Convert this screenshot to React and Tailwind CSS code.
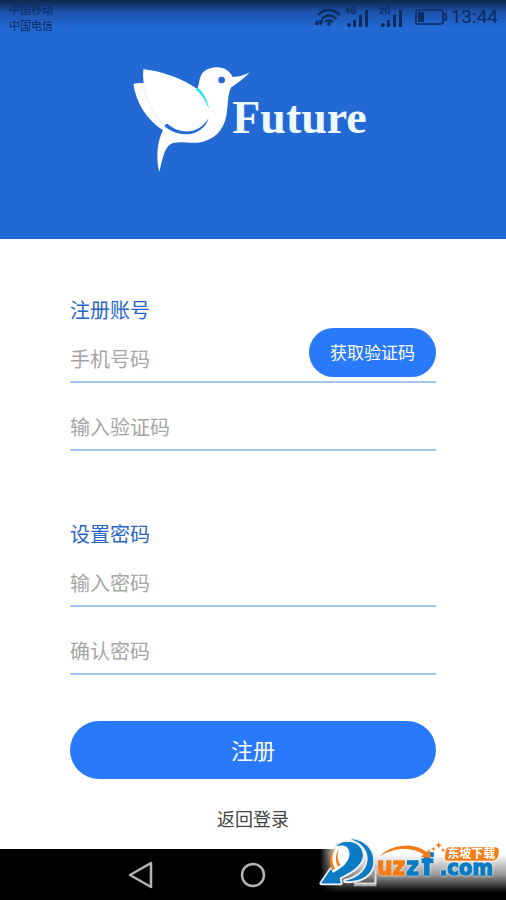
const SANS = "font-['Noto_Sans_CJK_SC',sans-serif]"

function SignalIcon({ label }) {
  return (
    <svg className="h-[22px] w-6" viewBox="0 0 24 22" fill="currentColor" aria-hidden="true">
      <text x="0" y="8" fontSize="9" fontWeight="700" fontFamily="Roboto, sans-serif">{label}</text>
      <circle cx="4" cy="19" r="2" />
      <rect x="8" y="14" width="3" height="7" />
      <rect x="14" y="9" width="3" height="12" />
      <rect x="20" y="4" width="3" height="17" />
    </svg>
  )
}

function WifiIcon() {
  return (
    <svg className="h-5 w-7" viewBox="0 0 28 20" fill="none" stroke="currentColor" aria-hidden="true">
      <path d="M3 8Q14-2 25 8" strokeWidth="2.4" />
      <path d="M6.500 12Q14 5 21.500 12" strokeWidth="2.400" />
      <path d="M10 15Q14 11.500 18 15" strokeWidth="2.200" />
      <circle cx="14" cy="17" r="2" fill="currentColor" stroke="none" />
      <path d="M0 16l2-3 2 3v2H0zM4 15l2 4 2-4v-2H4z" fill="currentColor" stroke="none" />
    </svg>
  )
}

function BatteryIcon() {
  return (
    <svg className="h-4 w-8" viewBox="0 0 32 16" fill="none" stroke="currentColor" aria-hidden="true">
      <rect x="1" y="1" width="27" height="14" rx="2" strokeWidth="1.600" />
      <path d="M29 5h2v6h-2" strokeWidth="1.600" />
      <rect x="3" y="3" width="6" height="10" fill="currentColor" stroke="none" />
    </svg>
  )
}

function StatusBar() {
  return (
    <div className="flex h-[34px] items-center justify-between bg-linear-to-b from-[#0f2c57] from-5% via-[#1c52ab] via-35% to-[#2269d3] to-80% pr-2 pl-[9px] text-[#0c2b60]">
      <div className="text-[11px] leading-4">
        <p>中国移动</p>
        <p>中国电信</p>
      </div>
      <div className="flex items-center">
        <WifiIcon />
        <span className="ml-0.5 flex gap-2.5">
          <SignalIcon label="4G" />
          <SignalIcon label="2G" />
        </span>
        <span className="mr-1 ml-3">
          <BatteryIcon />
        </span>
        <span className="font-['Roboto',sans-serif] text-[19px] leading-6">13:44</span>
      </div>
    </div>
  )
}

function BirdLogo() {
  return (
    <svg className="h-[107px] w-[120px] shrink-0" viewBox="34 32 360 321" aria-hidden="true">
      <path
        fill="#fff"
        d="M68 42C125 48 180 68 229 100C236 90 234 73 242 58C252 42 270 36 290 36C312 37 327 47 336 65C353 65 370 60 388 51C372 68 352 82 332 96C320 117 323 147 317 181C309 225 281 255 232 262C203 264 180 258 157 263C134 270 128 298 116 350C108 320 108 281 117 250Q122 235 127 225C78 193 47 144 38 86Q52 82 69 84Q66 62 68 42Z"
      />
      <path fill="#2ee3e8" d="M224 102L232 97C249 112 262 136 265 162C255 136 243 118 224 102Z" />
      <path fill="none" stroke="#e4dcf8" strokeWidth="2" d="M69 84C72 132 95 175 131 209" />
      <path fill="#2269d3" d="M132 213Q133 205 141 206C175 236 233 241 264 188C255 218 228 238 194 237C168 236 146 226 132 213Z" />
      <circle cx="303" cy="74" r="10" fill="#2269d3" />
    </svg>
  )
}

function Field({ id, label, type = 'text', className = '', children }) {
  return (
    <div className={`flex items-start border-b-2 border-[#a6c6ee] ${className}`}>
      <input
        id={id}
        type={type}
        aria-label={label}
        placeholder={label}
        className="h-[45px] min-w-0 flex-1 self-end bg-transparent text-xl outline-none placeholder:text-[#a6a6a6]"
      />
      {children}
    </div>
  )
}

function NavBar() {
  return (
    <nav className="flex h-[51px] items-center justify-center gap-[84px] bg-black text-[#b4b4b4]">
      <button type="button" aria-label="返回">
        <svg className="h-7 w-7" viewBox="0 0 28 28" fill="none" stroke="currentColor" strokeWidth="2.500" strokeLinejoin="round">
          <path d="M3 14L24 2V26Z" />
        </svg>
      </button>
      <button type="button" aria-label="主页">
        <svg className="h-7 w-7" viewBox="0 0 28 28" fill="none" stroke="currentColor" strokeWidth="2.500">
          <circle cx="14" cy="14" r="11" />
        </svg>
      </button>
      <button type="button" aria-label="最近任务">
        <svg className="h-7 w-7" viewBox="0 0 28 28" fill="none" stroke="currentColor" strokeWidth="2.500">
          <rect x="4" y="4" width="20" height="20" />
        </svg>
      </button>
    </nav>
  )
}

// Download-site stamp laid over the bottom right corner
function Watermark() {
  return (
    <div className="pointer-events-none absolute right-0 bottom-0 h-[70px] w-[196px]">
      <div className="absolute inset-x-0 bottom-0 h-[51px] bg-linear-to-b from-white from-10% via-[#999] via-50% to-transparent to-85% mask-l-from-85% mask-l-to-95%" />
      <svg className="relative h-full w-full" viewBox="0 0 588 210" aria-hidden="true">
        <path fill="none" stroke="#ddd" strokeWidth="5" d="M135 160H197V115" />
        <g stroke="#eee" strokeWidth="12" strokeLinejoin="round" paintOrder="stroke">
          <path fill="#0a7bc4" d="M79 48C105 26 157 34 158 76C157 108 121 126 88 144L92 160L34 160L63 118L69 129C96 114 118 97 119 72C118 50 103 41 79 48Z" />
          <path fill="#0a7bc4" d="M124 28C165 32 191 59 190 96C189 133 155 157 105 153C147 144 171 119 173 88C174 62 157 40 124 28Z" />
        </g>
        <path fill="#fff" d="M79 48C60 70 58 102 69 129C96 114 118 97 119 72C118 50 103 41 79 48Z" />
        <path fill="#0a7bc4" d="M79 48C105 26 157 34 158 76C157 108 121 126 88 144L92 160L34 160L63 118L69 129C96 114 118 97 119 72C118 50 103 41 79 48Z" />
        <path fill="#f47b16" d="M78 52C57 70 55 98 67 121L75 116C63 92 65 71 78 52ZM88 56C75 74 75 93 84 110L91 105C82 88 80 74 88 56Z" />
        <g
          className="drop-shadow-[0_0_3px_#fff]"
          fontFamily="'DejaVu Sans Condensed', 'DejaVu Sans', sans-serif"
          fontWeight="700"
          strokeWidth="4"
        >
          <text x="201" y="135" fontSize="73" fill="#f47b16" stroke="#f47b16">uz</text>
          <g fill="#0a7bc4" stroke="#0a7bc4">
            <text x="289" y="135" fontSize="73">z</text>
            <text x="335" y="135" fontSize="86">f</text>
            <text x="389" y="135" fontSize="66">.com</text>
          </g>
        </g>
        <path fill="#f47b16" d="M208 79C248 40 313 37 350 66L358 58L363 84L333 81L341 73C304 49 250 52 208 79Z" />
        <path fill="#f47b16" d="M386 36l3 7 7 3-7 3-3 7-3-7-7-3 7-3zM370 50l2 5 5 2-5 2-2 5-2-5-5-2 5-2zM399 53l2 5 5 2-5 2-2 5-2-5-5-2 5-2z" />
        <path fill="#f47b16" stroke="#fff" strokeWidth="5" paintOrder="stroke" d="M418 52H553Q569 52 566 68L564 79Q561 92 546 92H413Q402 92 405 80L407 64Q409 52 418 52Z" />
        <text x="412" y="85" fontSize="36" fontWeight="700" fontFamily="'Noto Sans CJK SC', sans-serif" fill="#fff">东坡下载</text>
      </svg>
    </div>
  )
}

export default function App() {
  return (
    <div className={`relative flex min-h-screen flex-col overflow-hidden bg-white ${SANS}`}>
      <header className="bg-[#2269d3]">
        <StatusBar />
        <div className="flex items-start justify-center pt-8 pr-[7px] pb-[66px]">
          <BirdLogo />
          <span className="-ml-5 pt-6 font-['Liberation_Serif',serif] text-[46px] leading-[56px] font-bold text-[#eef8ff]">
            Future
          </span>
        </div>
      </header>

      <main className="flex-1 px-[70px] pt-[57px] pb-4">
        <form>
          <h2 className="text-xl leading-7 text-[#2a66c8]">注册账号</h2>
          <Field id="phone" label="手机号码" type="tel" className="mt-1 h-[55px]">
            <button type="button" className="h-[49px] shrink-0 rounded-full bg-[#2979fb] px-[21px] pb-0.5 text-[17px] text-white">
              获取验证码
            </button>
          </Field>
          <Field id="code" label="输入验证码" className="mt-[21px]" />

          <h2 className="mt-[69px] text-xl leading-7 text-[#2a66c8]">设置密码</h2>
          <Field id="password" label="输入密码" type="password" className="mt-3" />
          <Field id="confirm" label="确认密码" type="password" className="mt-[21px]" />

          <button type="submit" className="mt-[46px] h-[58px] w-full rounded-full bg-[#2979fb] pb-0.5 text-[22px] text-white">
            注册
          </button>
        </form>
        <p className="mt-[25px] text-center text-lg leading-7 text-[#444]">
          <a href="#login">返回登录</a>
        </p>
      </main>

      <NavBar />
      <Watermark />
    </div>
  )
}
